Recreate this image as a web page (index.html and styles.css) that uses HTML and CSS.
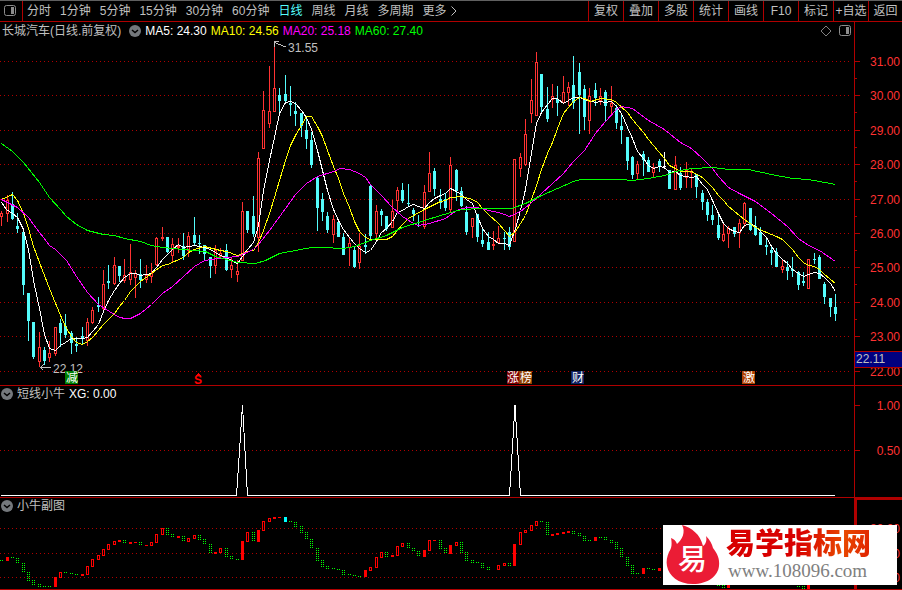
FILE: index.html
```html
<!DOCTYPE html>
<html lang="zh-CN">
<head>
    <title>长城汽车 日线</title>
    <meta charset="UTF-8">
    <link rel="stylesheet" href="styles.css">
</head>
<body>

    <!-- Toolbar -->
    <nav class="toolbar">
        <button class="layout-btn" type="button" aria-label="侧栏">
            <svg width="12" height="12" viewBox="0 0 12 12">
                <rect x="0.5" y="0.5" width="11" height="10" rx="2" fill="none" stroke="#8c8c8c"/>
                <rect x="7" y="2" width="3" height="7" fill="#8c8c8c"/>
            </svg>
        </button>
        <div class="periods">
            <button type="button">分时</button>
            <button type="button">1分钟</button>
            <button type="button">5分钟</button>
            <button type="button">15分钟</button>
            <button type="button">30分钟</button>
            <button type="button">60分钟</button>
            <button type="button" class="active">日线</button>
            <button type="button">周线</button>
            <button type="button">月线</button>
            <button type="button">多周期</button>
            <button type="button" class="more">更多
                <svg width="6" height="10" viewBox="0 0 6 10"><path d="M0.5 0.5 L5 5 L0.5 9.5" fill="none" stroke="#c0c0c0"/></svg>
            </button>
        </div>
        <div class="tools">
            <button type="button">复权</button>
            <button type="button">叠加</button>
            <button type="button">多股</button>
            <button type="button">统计</button>
            <button type="button">画线</button>
            <button type="button">F10</button>
            <button type="button">标记</button>
            <button type="button">+自选</button>
            <button type="button">返回</button>
        </div>
    </nav>

    <main>
        <!-- K line -->
        <section class="panel">
            <header class="panel-head main-head">
                <span>长城汽车(日线.前复权)</span>
                <button class="drop" type="button" aria-label="展开">
                    <svg width="12" height="12" viewBox="0 0 12 12"><circle cx="6" cy="6" r="6" fill="#74787c"/><path d="M3 5 L6 7.5 L9 5" fill="none" stroke="#000" stroke-width="1.5"/></svg>
                </button>
                <span class="ma ma5">MA5: 24.30</span>
                <span class="ma ma10">MA10: 24.56</span>
                <span class="ma ma20">MA20: 25.18</span>
                <span class="ma ma60">MA60: 27.40</span>
                <span class="head-icons">
                    <svg width="12" height="12" viewBox="0 0 12 12"><path d="M6 1 L11 6 L6 11 L1 6 Z" fill="none" stroke="#808080"/></svg>
                    <svg width="12" height="12" viewBox="0 0 12 12">
                        <rect x="0.5" y="0.5" width="11" height="10" rx="2" fill="none" stroke="#8c8c8c"/>
                        <rect x="7" y="2" width="3" height="7" fill="#8c8c8c"/>
                    </svg>
                </span>
            </header>
            <svg class="chart" id="kline" viewBox="0 40 902 345">
                <g id="klineGrid"></g>
                <g id="candles"></g>
                <g id="averages"></g>
                <g class="callout">
                    <path d="M285.5 47 L274.5 42.5 M279 41.5 H274.5 V47"/>
                    <text x="288" y="52">31.55</text>
                    <path d="M51 367.5 H40.5 M43.5 364.5 L40.5 367.5 L43.5 370.5"/>
                    <text x="53" y="373">22.12</text>
                </g>
                <g class="tag">
                    <rect x="65" y="371" width="13" height="13" fill="#008000"/>
                    <text x="66" y="382">减</text>
                    <rect x="507" y="371" width="12" height="13" fill="#800000"/>
                    <text x="507" y="382">涨</text>
                    <rect x="519" y="371" width="13" height="13" fill="#904000"/>
                    <text x="520" y="382">榜</text>
                    <rect x="571" y="371" width="13" height="13" fill="#102060"/>
                    <text x="572" y="382">财</text>
                    <rect x="742" y="371" width="13" height="13" fill="#b04000"/>
                    <text x="743" y="382">激</text>
                </g>
                <g class="signal">
                    <path d="M195 376 L198 373 L201 376 Z"/>
                    <text x="194" y="384">S</text>
                </g>
                <g class="cursor-price">
                    <rect x="855" y="351" width="47" height="17" fill="#b00000"/>
                    <rect x="855" y="352" width="47" height="15" fill="#000080"/>
                    <text x="856" y="363">22.11</text>
                </g>
            </svg>
        </section>

        <!-- Signal indicator -->
        <section class="panel">
            <header class="panel-head">
                <button class="drop" type="button" aria-label="展开">
                    <svg width="12" height="12" viewBox="0 0 12 12"><circle cx="6" cy="6" r="6" fill="#74787c"/><path d="M3 5 L6 7.5 L9 5" fill="none" stroke="#000" stroke-width="1.5"/></svg>
                </button>
                <span>短线小牛</span>
                <span class="ma ma5">XG: 0.00</span>
            </header>
            <svg class="chart" id="xg" viewBox="0 402 902 95">
                <g id="xgGrid"></g>
                <polyline class="line" stroke="#fff" points="1,495.5 236.5,495.5 242.5,405 247.5,495.5 509.5,495.5 515,405 520.5,495.5 835,495.5"/>
            </svg>
        </section>

        <!-- Sub chart -->
        <section class="panel">
            <header class="panel-head">
                <button class="drop" type="button" aria-label="展开">
                    <svg width="12" height="12" viewBox="0 0 12 12"><circle cx="6" cy="6" r="6" fill="#74787c"/><path d="M3 5 L6 7.5 L9 5" fill="none" stroke="#000" stroke-width="1.5"/></svg>
                </button>
                <span>小牛副图</span>
            </header>
            <svg class="chart" id="sub" viewBox="0 514 902 75">
                <g id="subGrid"></g>
                <path d="M902 499 H855.5 V589" fill="none" stroke="#b00000" stroke-width="2"/>
                <g id="subBars"></g>
            </svg>
        </section>

        <!-- Site mark -->
        <div class="watermark">
            <svg class="flame" width="54" height="60" viewBox="0 0 54 60">
                <path d="M16 0 C26 3 34 9 37 21 C40 19 41 15 40 11 C44 15 46 19 47 23 C51 28 54 34 53 41 C52 51 42 59 27 59 C12 59 3 51 1 41 C0 36 1 32 3 27 C6 23 6 18 5 13 C8 14 10 16 11 19 C16 15 20 7 16 0 Z" fill="#eb1c35"/>
                <text x="12" y="45">易</text>
            </svg>
            <div class="site">
                <div class="site-name">易学指标网</div>
                <a class="site-url" href="#">www.108096.com</a>
            </div>
        </div>
    </main>

    <script src="chart.js"></script>
</body>
</html>
```

FILE: styles.css
```css
body {
    margin: 0;
    background-color: #000;
    color: #c0c0c0;
    font-family: "Liberation Sans", "Noto Sans CJK SC", sans-serif;
    font-size: 12px;
    line-height: 16px;
}

button {
    background: none;
    border: none;
    padding: 0;
    color: inherit;
    font: inherit;
    white-space: nowrap;
    cursor: pointer;
}

svg {
    display: block;
}

/* Toolbar */
.toolbar {
    display: flex;
    height: 20px;
    border-top: 1px solid #606060;
    border-bottom: 1px solid #b00000;
}

.layout-btn {
    padding: 0 6px 0 4px;
    border-right: 1px solid #b00000;
}

.periods {
    display: flex;
    gap: 9px;
    padding-left: 4px;
}

.periods .active {
    color: #54fcfc;
}

.more {
    display: flex;
    align-items: center;
    gap: 4px;
}

.tools {
    display: flex;
    margin-left: auto;
}

.tools button {
    box-sizing: border-box;
    width: 35px;
    border-left: 1px solid #b00000;
}

.tools button:last-child {
    width: 34px;
}

/* Panels */
main {
    position: relative;
}

.panel {
    border-bottom: 1px solid #b00000;
}

.panel-head {
    display: flex;
    align-items: center;
    gap: 4px;
    height: 16px;
    margin-right: 47px;
    padding-left: 1px;
    border-right: 1px solid #b00000;
}

.main-head {
    height: 18px;
    padding-left: 2px;
}

.main-head .drop {
    margin-left: 4px;
}

.head-icons {
    display: flex;
    gap: 7px;
    margin-left: auto;
    margin-right: 3px;
}

.ma5 { color: #fff; }
.ma10 { color: #ff0; }
.ma20 { color: #f0f; }
.ma60 { color: #0f0; }

/* Charts */
.chart {
    width: 100%;
    height: auto;
    overflow: visible;
    shape-rendering: crispEdges;
}

.line {
    fill: none;
    stroke-width: 1;
}

.grid {
    stroke: #b00000;
    stroke-dasharray: 1 3;
}

.axis {
    stroke: #b00000;
}

.axis-label {
    fill: #ff3232;
    text-anchor: end;
}

.up {
    fill: none;
    stroke: #ff3232;
}

.down {
    fill: #54fcfc;
    stroke: none;
}

.flat {
    fill: #fff;
}

.sub-hollow {
    fill: none;
    stroke: #f00;
}

.sub-fill {
    fill: #f00;
}

.sub-cyan {
    fill: #0ff;
}

.sub-dots {
    stroke: #0f0;
    stroke-dasharray: 1 1;
}

.callout path {
    fill: none;
    stroke: #c0c0c0;
}

.callout text,
.cursor-price text {
    fill: #c0c0c0;
}

.tag text {
    fill: #fff;
    font-size: 12px;
}

.signal {
    fill: #f00;
    font-weight: bold;
}

/* Site mark */
.watermark {
    position: absolute;
    right: 5px;
    bottom: 5px;
    display: flex;
    width: 234px;
    height: 60px;
    background-color: #fff;
}

.flame {
    margin-left: 3px;
}

.flame text {
    fill: #fff;
    font-size: 29px;
    font-weight: 500;
}

.site {
    padding-left: 6px;
}

.site-name {
    font-family: "Noto Sans CJK SC", sans-serif;
    font-size: 29px;
    font-weight: 900;
    line-height: 32px;
    background: linear-gradient(100deg, #d80000 50%, #e84800 80%, #e02000);
    -webkit-background-clip: text;
    background-clip: text;
    color: transparent;
}

.site-url {
    display: block;
    margin-left: 2px;
    font-family: "Liberation Serif", serif;
    font-size: 19px;
    line-height: 28px;
    color: #808080;
    text-decoration: none;
}
```

FILE: chart.js
```js
// type, high, body top, body bottom, low
const candles = `
R 211 213 217 226|R 195 200 214 222|C 192 204 219 220|C 213 226 229 233|C 232 232 285 295|C 293 293 321 341
C 322 322 357 359|R 332 347 362 367|C 347 350 361 365|R 341 353 358 362|R 327 327 354 356|C 319 323 333 347
C 314 326 335 338|C 331 333 343 354|C 337 344 346 352|C 327 336 339 344|R 318 322 341 346|R 307 310 323 324
C 297 305 307 312|R 270 284 309 310|C 265 281 283 289|R 257 265 284 285|C 266 266 276 282|R 259 275 281 283
R 244 272 280 285|R 270 273 278 298|C 259 274 280 288|R 265 275 280 283|R 263 273 277 283|R 237 238 265 266
R 227 237 238 241|C 237 237 252 253|R 238 244 256 262|R 238 246 248 253|C 233 246 256 260|R 232 236 251 257
C 217 235 243 245|C 235 243 244 254|C 245 245 254 260|C 257 257 266 278|R 245 250 266 274|R 248 253 257 259
C 244 250 270 271|R 257 265 270 278|R 260 271 275 282|R 202 211 261 261|C 211 211 230 233|C 196 216 234 237
R 152 158 238 252|R 91 110 149 149|R 66 111 124 128|R 45 88 112 112|C 88 95 101 113|C 75 94 101 104
C 86 103 105 116|C 102 111 114 126|C 113 113 126 137|C 116 130 139 149|C 132 140 165 168|C 177 178 208 231
C 193 199 212 221|C 212 216 230 233|R 215 219 235 243|C 220 222 237 237|C 233 237 255 255|R 237 243 248 266
C 246 250 267 268|R 233 246 263 269|C 234 245 247 254|C 185 186 236 240|R 205 211 234 241|C 209 211 215 226
C 216 216 229 231|R 200 211 228 228|R 187 190 201 212|C 183 190 201 203|C 184 203 204 207|C 208 210 214 221
C 215 222 223 227|R 185 192 227 229|R 152 173 192 192|C 168 171 189 196|C 189 199 203 209|C 193 199 208 211
R 157 165 210 212|C 169 170 191 201|C 187 191 206 207|C 206 212 232 235|R 218 218 227 238|C 214 214 237 242
C 227 240 244 247|C 232 242 250 250|R 231 244 246 250|R 226 238 243 243|C 232 238 239 250|C 227 232 247 250
R 159 159 242 242|R 153 157 169 177|R 119 134 165 166|R 79 100 114 123|R 52 62 116 116|C 74 74 107 112
C 87 109 119 122|R 84 96 100 108|C 86 99 103 116|R 76 92 103 103|R 82 87 93 106|C 56 85 103 109
C 63 72 95 134|C 85 89 117 130|R 88 96 121 134|C 83 90 98 106|R 88 96 101 105|C 90 92 106 121
R 86 103 107 115|C 105 108 123 129|C 115 126 130 144|C 137 137 161 170|C 156 157 175 179|R 161 164 174 179
C 151 154 160 176|C 157 160 172 172|R 163 167 173 177|C 159 161 166 172|W 152 166 167 169|C 170 170 189 189
R 156 165 190 190|C 167 173 188 190|R 162 170 178 188|R 169 171 173 188|C 174 174 187 198|C 190 193 202 210
C 199 202 215 221|C 205 215 220 225|C 215 225 238 240|R 224 234 241 242|R 226 228 234 248|C 227 227 234 237
R 219 223 233 248|R 202 203 224 227|C 208 208 230 231|C 216 226 235 236|C 227 232 245 245|C 238 245 247 255
C 247 250 253 265|C 248 252 267 267|R 259 266 270 273|C 261 267 271 280|C 257 269 271 277|C 271 272 285 290
C 272 281 283 286|R 259 259 289 289|C 253 259 260 264|C 255 257 279 279|C 282 284 297 304|C 298 298 307 317
C 294 307 314 321`;

const averages = [
    ["#fff", "1,202 6,209 12,213 17,217 23,229 28,249 33,280 39,308 44,334 49,348 55,350 60,345 65,342 71,338 82,338 87,337 92,331 98,324 103,311 108,300 114,290 119,283 124,277 130,273 135,273 140,275 151,273 156,267 162,259 167,254 172,249 178,244 183,247 194,245 199,246 204,247 210,249 220,255 226,257 231,260 237,263 242,256 247,249 253,242 258,225 263,190 269,160 274,137 279,113 285,102 290,101 295,103 301,110 306,117 311,129 317,150 322,170 327,190 333,209 338,220 343,229 349,237 354,243 359,248 365,252 370,250 376,241 381,232 386,228 392,221 397,212 402,210 408,206 413,204 418,206 424,208 429,202 434,198 440,195 445,193 450,188 456,191 461,194 466,199 472,203 477,216 482,228 488,236 493,239 498,243 504,243 509,245 515,228 520,210 525,189 530,159 536,123 541,112 547,104 552,98 557,98 563,103 568,100 573,97 579,97 584,99 595,102 600,101 605,102 611,101 616,106 621,113 627,127 632,138 637,151 643,158 648,165 653,168 659,166 664,167 669,172 675,171 680,175 691,177 696,176 702,184 707,189 712,200 718,213 723,223 728,228 734,231 739,232 744,225 750,223 755,226 760,231 766,237 771,246 776,253 782,259 787,263 792,269 798,273 803,276 808,274 814,272 819,273 824,277 830,283 835,291"],
    ["#ff0", "1,199 12,194 17,200 23,213 28,228 33,246 39,262 49,288 60,315 65,326 71,336 76,342 82,344 87,341 92,337 103,324 114,313 119,306 124,300 130,291 135,286 140,281 151,273 162,265 167,264 183,257 188,252 194,249 204,246 220,250 226,251 237,255 247,251 253,250 258,242 263,230 269,213 274,197 279,180 285,160 290,145 295,135 301,125 306,116 311,116 317,126 322,136 327,150 333,166 338,178 343,193 349,207 354,221 359,231 365,237 370,239 386,239 392,236 397,230 402,224 408,218 413,215 424,209 434,204 440,201 445,200 450,197 461,196 472,199 477,202 482,208 488,214 498,223 504,230 509,236 515,231 520,223 525,215 530,202 536,185 541,169 547,153 552,142 557,128 563,113 568,107 573,101 579,97 584,98 590,101 600,98 611,99 616,102 627,112 632,119 637,125 643,132 648,139 658,151 664,158 669,165 675,168 680,171 691,171 702,177 707,182 712,187 718,195 723,200 728,206 739,215 744,219 755,227 766,232 776,236 782,239 787,244 792,249 798,257 803,262 808,265 814,266 819,269 824,274 835,283"],
    ["#f0f", "1,199 17,207 28,217 33,224 49,245 55,249 66,260 76,276 87,292 98,304 109,311 119,317 125,318 130,318 140,313 151,304 162,293 172,286 183,276 194,266 204,260 226,257 237,256 253,249 258,244 269,230 285,208 295,194 306,183 317,176 333,171 340,168 349,169 359,173 365,177 370,184 381,195 391,206 402,216 413,223 418,225 429,223 445,218 456,210 466,207 477,207 488,210 498,212 504,214 509,216 520,211 530,203 541,193 552,183 563,173 573,161 584,150 595,133 605,121 616,109 621,106 632,108 648,120 664,129 670,134 680,142 691,148 702,158 712,168 718,176 728,187 739,193 755,201 771,213 787,226 798,238 808,245 819,250 835,261"],
    ["#0f0", "1,143 12,151 23,162 39,182 49,197 60,209 66,216 76,224 87,230 103,234 114,235 124,238 140,241 151,245 162,247 183,249 205,251 215,256 237,262 255,263 265,260 279,253 295,250 311,247 322,247 343,248 354,246 370,240 386,235 402,227 424,220 440,215 461,209 480,208 511,208 525,203 541,195 557,188 573,181 580,179 620,179 632,180 648,178 664,175 675,171 691,168 713,167 728,169 748,169 771,174 792,178 808,179 819,181 830,183 835,184"]
];

// G dotted, F filled, H hollow, C cyan, - empty
const subBars = `
G 560 561|F 557 561|G 557 559|G 558 564|G 563 573|G 572 581|G 580 585|G 584 587|G 586 587|G 586 587
F 577 587|H 572 578|G 572 574|G 573 575|G 574 576|F 574 576|H 566 575|H 559 567|H 555 560|H 549 556
H 544 550|H 541 545|F 540 542|G 540 544|F 542 544|F 542 543|G 542 546|F 545 546|H 542 546|H 534 543
H 528 535|G 528 535|G 534 538|F 536 538|G 536 542|H 538 542|H 535 539|G 535 540|G 539 545|G 544 554
F 552 554|H 548 553|G 548 557|G 556 560|G 559 560|F 541 560|H 532 542|G 532 542|F 530 542|H 521 531
H 518 522|F 517 519|F 517 518|C 517 522|G 521 523|G 522 527|G 526 533|G 532 540|G 539 549|G 548 561
G 560 567|G 566 569|G 568 570|G 569 571|G 570 575|G 574 576|G 575 577|G 576 577|F 570 577|H 567 571
H 557 568|H 552 558|G 552 557|F 555 557|H 546 556|H 543 547|G 543 549|G 548 552|G 551 557|F 550 557
H 540 551|F 540 541|G 540 549|G 548 554|F 545 554|H 542 546|G 542 553|G 552 561|G 560 563|G 562 564
G 563 568|G 567 570|-|H 565 570|H 563 566|G 563 566|F 544 566|H 532 545|H 530 533|H 525 531
H 521 526|G 521 523|G 522 536|F 534 536|F 533 535|F 532 534|F 531 533|G 531 534|G 533 537|G 536 541
G 540 541|F 537 541|G 537 538|G 537 541|G 540 543|G 542 549|G 548 558|G 557 566|G 565 574|G 573 574
F 568 574|G 568 570|G 569 571|F 568 571|-|-|-|-|-|-
-|-|-|-|G 585 586|G 585 588|F 585 588|-|-|-
-|-|-|-|-|-|-|-|-|G 586 587
G 586 589|F 585 589`;

const parse = text => text.trim().split(/[|\n]/).map(row => row.split(" ").map((v, i) => i ? +v : v));
const barX = i => Math.round(1.35 + 5.345 * i);
const rect = (x, y, w, h, cls) => `<rect x="${x}" y="${y}" width="${w}" height="${h}" class="${cls}"/>`;
const line = (x1, y1, x2, y2, cls) => `<line x1="${x1}" y1="${y1}" x2="${x2}" y2="${y2}" class="${cls}"/>`;

function draw(id, html) {
    document.getElementById(id).innerHTML = html;
}

function grid(rows, top, bottom) {
    let out = line(854.5, top, 854.5, bottom, "axis");
    rows.forEach(([y, label]) => {
        out += line(0, y + 0.5, 852, y + 0.5, "grid");
        out += line(855, y + 0.5, 860, y + 0.5, "axis");
        out += `<text x="900" y="${y + 5}" class="axis-label">${label}</text>`;
    });
    return out;
}

function candle([type, high, top, bottom, low], i) {
    const x = barX(i);
    if (type === "R") {
        return line(x + 0.5, high, x + 0.5, top, "up")
            + rect(x - 0.5, top + 0.5, 2, Math.max(bottom - top - 1, 1), "up")
            + line(x + 0.5, bottom, x + 0.5, low, "up");
    }
    const cls = type === "W" ? "flat" : "down";
    return rect(x, high, 1, low - high, cls) + rect(x - 1, top, 3, bottom - top, cls);
}

function subBar([type, top, bottom], i) {
    const x = barX(i);
    if (type === "G") {
        return line(x - 0.5, top, x - 0.5, bottom, "sub-dots") + line(x + 1.5, top, x + 1.5, bottom, "sub-dots");
    }
    if (type === "H") {
        return rect(x - 0.5, top + 0.5, 2, bottom - top - 1, "sub-hollow");
    }
    if (type === "-") {
        return "";
    }
    return rect(x - 1, top, 3, bottom - top, type === "C" ? "sub-cyan" : "sub-fill");
}

const prices = [61, 95, 130, 164, 199, 233, 267, 302, 336, 371].map((y, i) => [y, (31 - i).toFixed(2)]);
const halfTicks = prices.slice(0, -1).map(([y]) => line(855, y + 17.5, 857, y + 17.5, "axis")).join("");

draw("klineGrid", grid(prices, 40, 385) + halfTicks);
draw("candles", parse(candles).map(candle).join(""));
draw("averages", averages.map(([color, points]) => `<polyline class="line" stroke="${color}" points="${points}" transform="translate(0.5 0.5)"/>`).join(""));

draw("xgGrid", grid([[450, "0.50"]], 402, 497) + line(855, 405.5, 860, 405.5, "axis") + `<text x="900" y="410" class="axis-label">1.00</text>`);

draw("subGrid", grid([[528, "80.00"], [553, "50.00"], [577, "20.00"]], 514, 589));
draw("subBars", parse(subBars).map(subBar).join(""));
```
